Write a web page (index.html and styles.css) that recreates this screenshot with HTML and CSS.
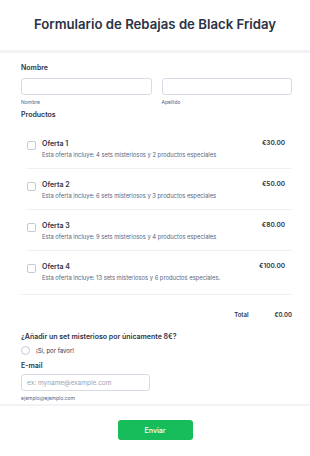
FILE: index.html
```html
<!DOCTYPE html>
<html lang="es">
<head>
<meta charset="utf-8">
<link rel="stylesheet" href="styles.css">
</head>
<body>
<div class="page">
  <header class="header">
    <h1 class="title">Formulario de Rebajas de Black Friday</h1>
  </header>
  <main class="form">
    <section class="field">
      <div class="label">Nombre</div>
      <div class="name-row">
        <div class="name-col">
          <div class="input"></div>
          <div class="sub">Nombre</div>
        </div>
        <div class="name-col">
          <div class="input"></div>
          <div class="sub">Apellido</div>
        </div>
      </div>
    </section>
    <section class="field products">
      <div class="label">Productos</div>
      <div class="plist">
        <div class="prod">
          <span class="check"></span>
          <div class="pinfo">
            <div class="pname">Oferta 1</div>
            <div class="pdesc">Esta oferta incluye: 4 sets misteriosos y 2 productos especiales</div>
          </div>
          <div class="price">€30.00</div>
        </div>
        <div class="prod">
          <span class="check"></span>
          <div class="pinfo">
            <div class="pname">Oferta 2</div>
            <div class="pdesc">Esta oferta incluye: 6 sets misteriosos y 3 productos especiales</div>
          </div>
          <div class="price">€50.00</div>
        </div>
        <div class="prod">
          <span class="check"></span>
          <div class="pinfo">
            <div class="pname">Oferta 3</div>
            <div class="pdesc">Esta oferta incluye: 9 sets misteriosos y 4 productos especiales</div>
          </div>
          <div class="price">€80.00</div>
        </div>
        <div class="prod last">
          <span class="check"></span>
          <div class="pinfo">
            <div class="pname">Oferta 4</div>
            <div class="pdesc">Esta oferta incluye: 13 sets misteriosos y 6 productos especiales.</div>
          </div>
          <div class="price">€100.00</div>
        </div>
      </div>
      <div class="total">
        <span class="tlabel">Total</span>
        <span class="tvalue">€0.00</span>
      </div>
    </section>
    <section class="field">
      <div class="label">¿Añadir un set misterioso por únicamente 8€?</div>
      <div class="radio-row"><span class="radio"></span><span class="rtext">¡Sí, por favor!</span></div>
    </section>
    <section class="field email-field">
      <div class="label">E-mail</div>
      <div class="input email"><span class="ph">ex: myname@example.com</span></div>
      <div class="sub">ejemplo@ejemplo.com</div>
    </section>
  </main>
  <footer class="footer">
    <button class="submit">Enviar</button>
  </footer>
</div>
</body>
</html>
```
FILE: styles.css
```css
* { box-sizing: border-box; }
html, body { margin: 0; padding: 0; background: #fff; }
body { font-family: Inter, "Noto Sans", sans-serif; color: #2c3345; }
.page { width: 310px; }
.header { height: 53px; border-bottom: 3px solid #f3f3f5; display: flex; align-items: center; justify-content: center; padding-bottom: 2px; }
.title { margin: 0; font-size: 13.2px; font-weight: 600; color: #2c3345; }
.form { padding: 10px 18px 0 21px; }
.label { font-size: 7px; font-weight: 600; color: #2c3345; line-height: 9px; }
.name-row { display: flex; gap: 10px; margin-top: 6px; }
.name-col { flex: 1; }
.input { height: 17px; border: 1px solid #d8dae6; border-radius: 3px; background: #fff; }
.sub { font-size: 5px; color: #57647e; margin-top: 4px; line-height: 6px; }
.field + .field { margin-top: 10px; }
.field.products { margin-top: 5px; }
.plist { margin-top: 14px; padding-left: 6px; }
.prod { display: flex; align-items: flex-start; padding: 6px 7px 9px 0; border-bottom: 1px solid #eef0f4; }
.prod + .prod { padding-top: 11px; }
.prod.last { border-bottom: none; padding-bottom: 12px; }
.check { width: 9px; height: 9px; border: 1px solid #c3cad8; border-radius: 2px; flex: none; margin: 2px 6px 0 0; }
.pinfo { flex: 1; }
.pname { font-size: 7px; font-weight: 600; line-height: 9px; }
.pdesc { font-size: 5.8px; color: #57647e; line-height: 9px; margin-top: 2px; }
.price { font-size: 6.5px; font-weight: 600; line-height: 9px; }
.total { border-top: 1px solid #eef0f4; padding: 15px 0 3px; display: flex; justify-content: flex-end; gap: 26px; font-size: 6px; font-weight: 600; line-height: 9px; }
.radio-row { display: flex; align-items: center; margin-top: 5px; }
.radio { width: 9px; height: 9px; border: 1px solid #c3cad8; border-radius: 50%; margin-right: 6px; }
.rtext { font-size: 6px; color: #2c3345; }
.field.email-field { margin-top: 6px; }
.email { width: 129px; margin-top: 4px; display: flex; align-items: center; padding-left: 5px; }
.ph { font-size: 6.5px; color: #9aa2b3; }
.footer { margin-top: 3px; border-top: 2px solid #f3f3f5; display: flex; justify-content: center; padding-top: 14px; }
.submit { width: 75px; height: 20px; border: none; border-radius: 3px; background: #18bd5b; color: #fff; font-family: Inter, sans-serif; font-size: 7px; font-weight: 500; }
```
